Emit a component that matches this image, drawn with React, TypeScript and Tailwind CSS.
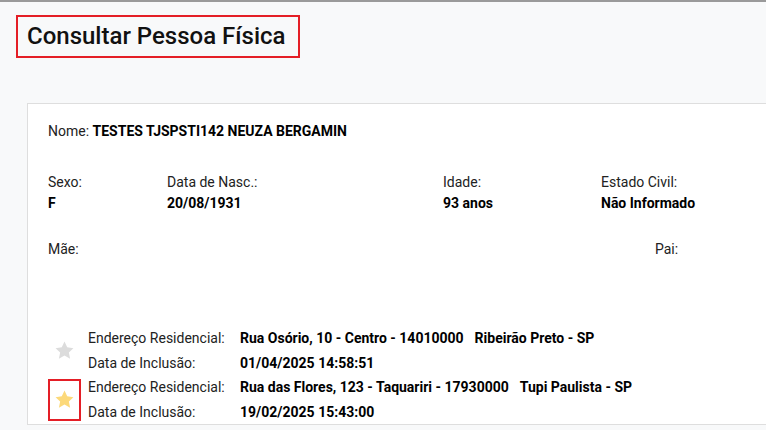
function Star({ color }: { color: string }) {
  return (
    <svg width="21" height="21" viewBox="0 0 24 24" fill={color}>
      <path d="M12 1.8l3.1 6.6 7.1.9-5.2 4.9 1.4 7.1L12 17.8l-6.4 3.5 1.4-7.1-5.2-4.9 7.1-.9z" />
    </svg>
  );
}

const enderecos = [
  {
    endereco: "Rua Osório, 10 - Centro - 14010000",
    cidade: "Ribeirão Preto - SP",
    data: "01/04/2025 14:58:51",
    principal: false,
  },
  {
    endereco: "Rua das Flores, 123 - Taquariri - 17930000",
    cidade: "Tupi Paulista - SP",
    data: "19/02/2025 15:43:00",
    principal: true,
  },
];

export default function App() {
  return (
    <div className="h-[430px] w-[766px] overflow-hidden border-t-2 border-[#9a9a9a] bg-[#f8f9fa] font-['Roboto',sans-serif] text-[14px] leading-[20px] text-[#222]">
      <div className="ml-[16px] mt-[13px] inline-block border-[2.5px] border-[#e41e26] pl-[9px] pr-[12px] pt-[4px] pb-[5px]">
        <h1 className="text-[24px] font-medium leading-[30px] text-[#111]">Consultar Pessoa Física</h1>
      </div>

      <div className="ml-[27px] mt-[45px] w-[800px] border border-[#dedede] bg-white pl-[20px] pt-[17px]">
        <p>
          Nome: <span className="font-bold text-black">TESTES TJSPSTI142 NEUZA BERGAMIN</span>
        </p>

        <div className="mt-[31px] flex">
          <div className="w-[119px]">
            <p>Sexo:</p>
            <p className="mt-[1px] font-bold text-black">F</p>
          </div>
          <div className="w-[276px]">
            <p>Data de Nasc.:</p>
            <p className="mt-[1px] font-bold text-black">20/08/1931</p>
          </div>
          <div className="w-[158px]">
            <p>Idade:</p>
            <p className="mt-[1px] font-bold text-black">93 anos</p>
          </div>
          <div>
            <p>Estado Civil:</p>
            <p className="mt-[1px] font-bold text-black">Não Informado</p>
          </div>
        </div>

        <div className="mt-[26px] flex">
          <p className="w-[607px]">Mãe:</p>
          <p>Pai:</p>
        </div>

        <div className="mt-[67px]">
          {enderecos.map((e) => (
            <div key={e.data} className="flex items-center">
              <div
                className={`flex h-[42px] w-[33px] items-center justify-center ${
                  e.principal ? "border-[2.5px] border-[#e41e26]" : ""
                }`}
              >
                <Star color={e.principal ? "#fcd97a" : "#dcdcdc"} />
              </div>
              <div className="ml-[7px] grid grid-cols-[152px_1fr] leading-[24.5px]">
                <span>Endereço Residencial:</span>
                <span className="font-bold text-black">
                  {e.endereco}
                  <span className="ml-[11px]">{e.cidade}</span>
                </span>
                <span>Data de Inclusão:</span>
                <span className="font-bold text-black">{e.data}</span>
              </div>
            </div>
          ))}
        </div>
      </div>
    </div>
  );
}
